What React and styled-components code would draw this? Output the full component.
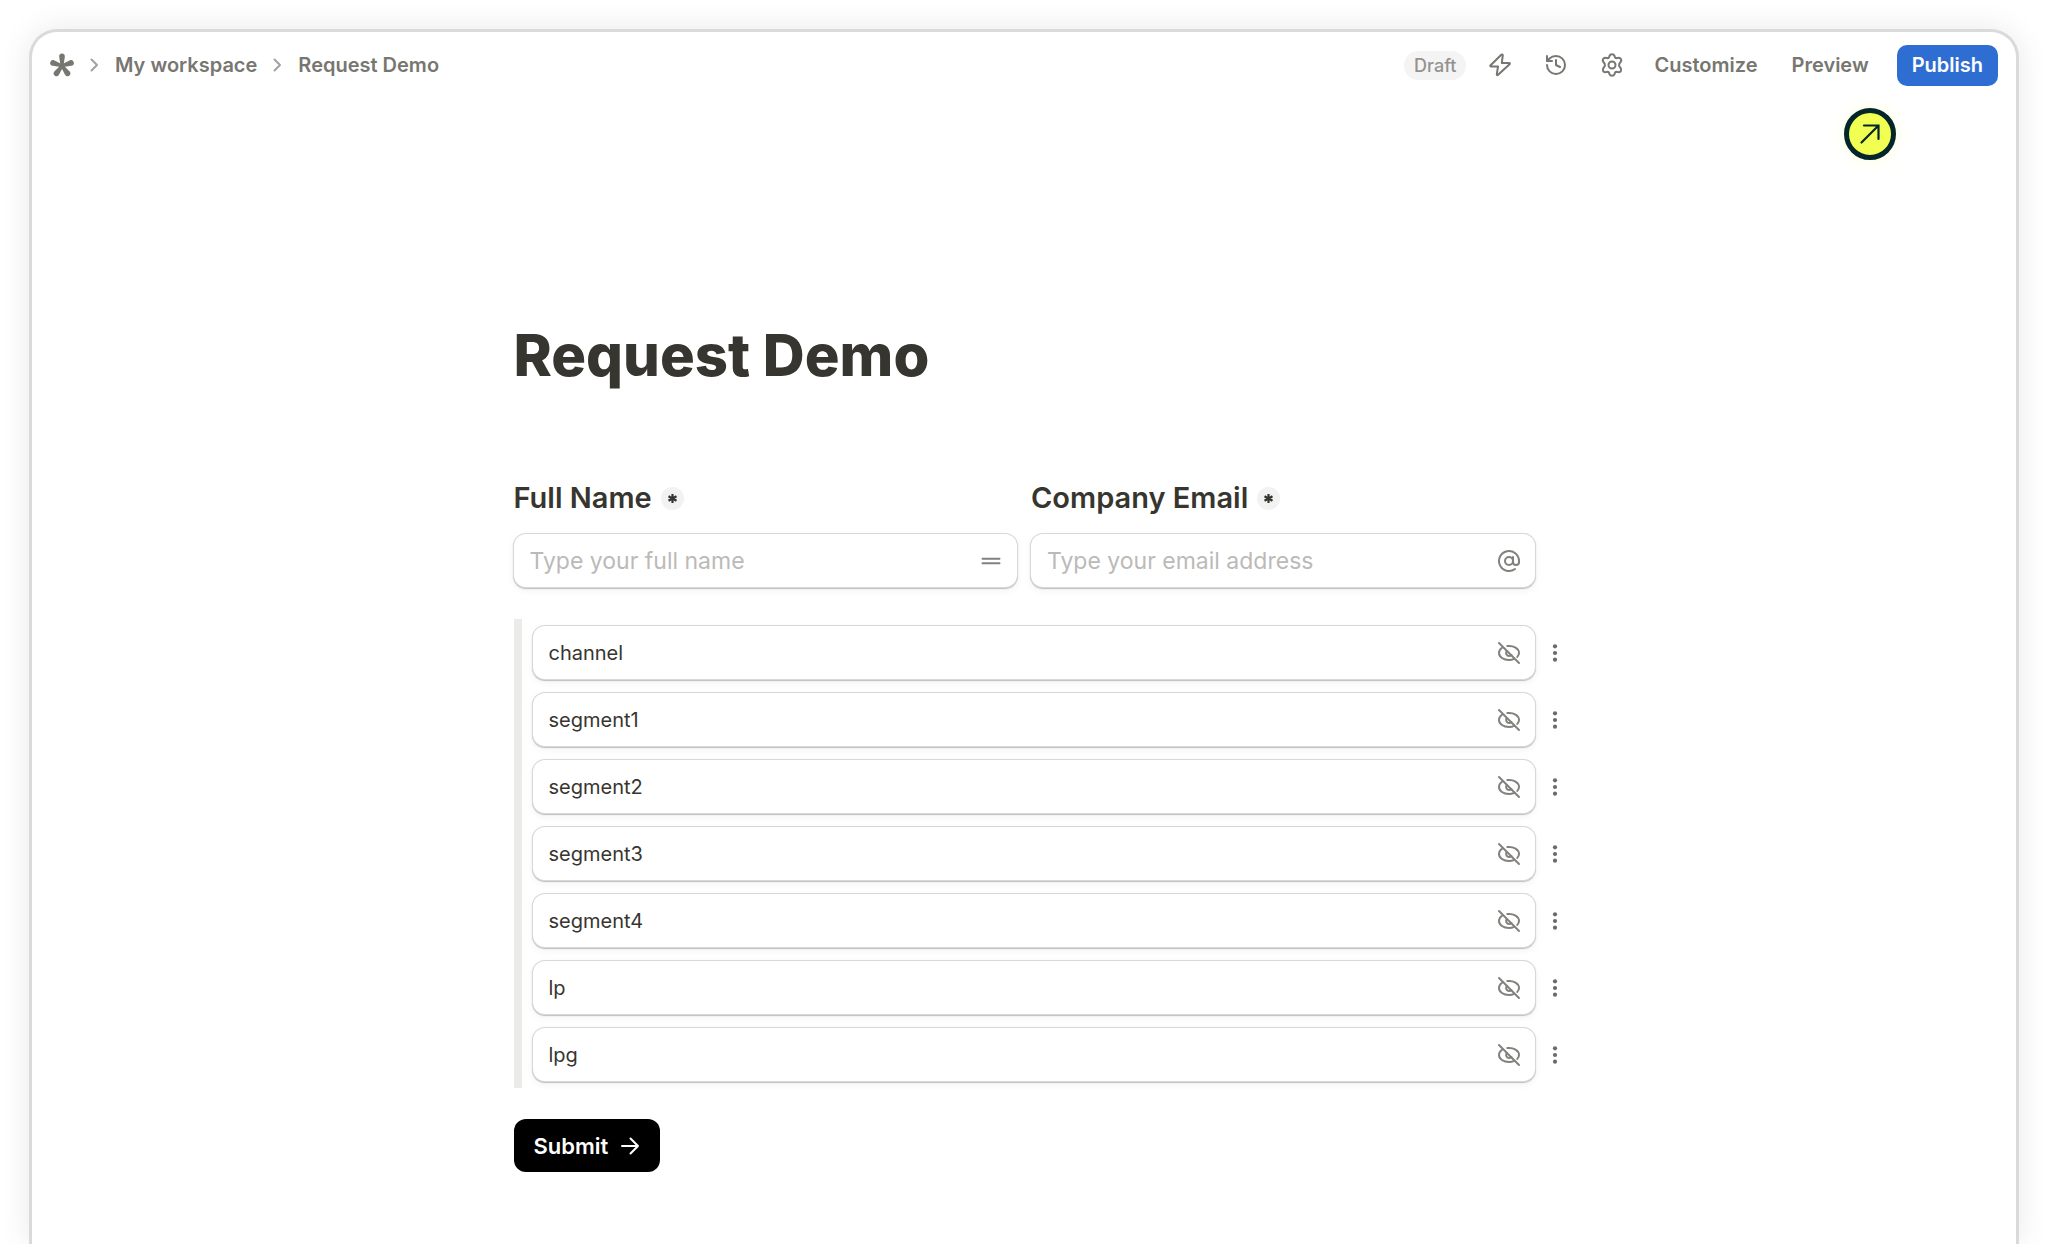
import React from "react";
import styled, { createGlobalStyle } from "styled-components";
import { AtSign, History } from "lucide-react";

const GlobalStyle = createGlobalStyle`
  * {
    box-sizing: border-box;
  }

  body {
    margin: 0;
    background-color: #ffffff;
    color: #37352f;
    font-family: Inter, "Liberation Sans", sans-serif;
  }

  button,
  input {
    font-family: inherit;
  }
`;

const Page = styled.div`
  padding: 29px 29px 0;
  overflow: hidden;
`;

const Window = styled.div`
  position: relative;
  min-height: calc(100vh - 29px);
  border: 3px solid #d9dbda;
  border-bottom: none;
  border-radius: 28px 28px 0 0;
  background-color: #ffffff;
  box-shadow: 0 0 32px rgba(0, 0, 0, 0.09);
`;

const Header = styled.header`
  display: flex;
  align-items: center;
  justify-content: space-between;
  height: 66px;
  padding: 0 18px;
`;

const Breadcrumbs = styled.nav`
  display: flex;
  align-items: center;
  gap: 16px;
`;

const Crumb = styled.a`
  display: flex;
  color: #777670;
  font-size: 20px;
  font-weight: 600;
  line-height: 24px;
  text-decoration: none;
`;

const Actions = styled.div`
  display: flex;
  align-items: center;
  gap: 34px;
`;

const IconGroup = styled.div`
  display: flex;
  align-items: center;
  gap: 32px;
  margin: 0 -4px 0 -12px;
`;

const Status = styled.span`
  padding: 0 10px;
  border-radius: 15px;
  background-color: #f4f4f4;
  color: #93928e;
  font-size: 18px;
  font-weight: 500;
  line-height: 29px;
`;

const PlainButton = styled.button`
  display: flex;
  align-items: center;
  padding: 0;
  border: none;
  background: none;
  color: #777670;
  font-size: 20px;
  font-weight: 600;
  line-height: 24px;
  cursor: pointer;
`;

const Publish = styled(PlainButton)`
  height: 41px;
  margin-left: -6px;
  padding: 0 15px;
  border-radius: 10px;
  background-color: #2e6dd2;
  color: white;
`;

const Pointer = styled.div`
  position: absolute;
  top: 76px;
  right: 120px;
  display: flex;
  align-items: center;
  justify-content: center;
  width: 52px;
  height: 52px;
  border: 5px solid #04262a;
  border-radius: 50%;
  background-color: #f0ff52;
  box-shadow: 0 0 16px rgba(240, 255, 82, 0.2);
`;

const Form = styled.form`
  max-width: 1021px;
  margin: 0 auto;
  padding: 221px 0 60px;
`;

const Title = styled.h1`
  margin: 0 0 89px;
  font-size: 58px;
  font-weight: 800;
  line-height: 72px;
`;

const Fields = styled.div`
  display: grid;
  grid-template-columns: 1fr 1fr;
  gap: 14px;
  margin-bottom: 32px;
`;

const LabelRow = styled.div`
  display: flex;
  align-items: center;
  gap: 9px;
  margin-bottom: 18px;
`;

const Label = styled.label`
  font-size: 29px;
  font-weight: 600;
  line-height: 36px;
`;

const Required = styled.span`
  display: flex;
  align-items: center;
  justify-content: center;
  width: 23px;
  height: 23px;
  border-radius: 50%;
  background-color: #f2f2f2;
`;

const InputBox = styled.div`
  display: flex;
  align-items: center;
  flex: 1;
  height: 53px;
  padding: 0 14px 0 16px;
  border-radius: 12px;
  background-color: white;
  color: #82817d;
  box-shadow: 0 0 0 1px #d8d8d8, 0 1px 1px 1px rgba(0, 0, 0, 0.22),
    0 3px 8px rgba(0, 0, 0, 0.06);
`;

const Input = styled.input`
  flex: 1;
  min-width: 0;
  padding: 0;
  border: none;
  outline: none;
  background: none;
  color: #37352f;
  font-size: ${(props) => (props.$small ? "20px" : "23px")};

  &::placeholder {
    color: #bbbab8;
    opacity: 1;
  }
`;

const HiddenFields = styled.div`
  display: flex;
  flex-direction: column;
  gap: 14px;
  margin-bottom: 31px;
  padding: 7px 0 7px 11px;
  border-left: 8px solid #ebebea;
`;

const HiddenField = styled.div`
  display: flex;
  align-items: center;
  margin-right: -32px;
`;

const MenuButton = styled(PlainButton)`
  justify-content: center;
  width: 12px;
  height: 28px;
  margin-left: 14px;
  margin-right: 6px;
`;

const Submit = styled.button`
  display: flex;
  align-items: center;
  gap: 12px;
  height: 53px;
  padding: 0 20px;
  border: none;
  border-radius: 12px;
  background-color: black;
  color: white;
  font-size: 22px;
  font-weight: 600;
  line-height: 28px;
  cursor: pointer;
`;

const hiddenFields = [
  "channel",
  "segment1",
  "segment2",
  "segment3",
  "segment4",
  "lp",
  "lpg",
];

const LogoIcon = () => (
  <svg width="24" height="24" viewBox="0 0 24 24" fill="#777670">
    {[0, 72, 144, 216, 288].map((angle) => (
      <path
        key={angle}
        transform={`rotate(${angle} 12 12.8)`}
        d="M10.600 13.500 9.200 4C8.900 1.800 10 .6 12 .6s3.100 1.200 2.800 3.400L13.400 13.500z"
      />
    ))}
  </svg>
);

const ChevronIcon = () => (
  <svg width="9" height="14" viewBox="0 0 9 14" fill="none">
    <path
      d="M1.500 1.500 7 7l-5.500 5.500"
      stroke="#a3a29e"
      strokeWidth="2"
      strokeLinecap="round"
      strokeLinejoin="round"
    />
  </svg>
);

const ZapIcon = () => (
  <svg width="24" height="24" viewBox="0 0 24 24" fill="none">
    <path
      d="M13.300 1.800 2.600 12.300c-.6.600-.3 1.300.5 1.300H10L8.800 21.200c-.1 1 .6 1.300 1.300.6L21.600 11.200c.6-.6.300-1.300-.5-1.300H13.800l1-7.500c.1-1-.8-1.300-1.500-.6z"
      stroke="currentColor"
      strokeWidth="2"
      strokeLinejoin="round"
    />
  </svg>
);

const GearIcon = () => (
  <svg width="24" height="24" viewBox="0 0 24 24" fill="none">
    <g stroke="currentColor" strokeWidth="2" strokeLinejoin="round">
      <path d="M9.500 2.900C9.900 1.700 10.800 1.200 12 1.200s2.100.5 2.500 1.700l.3 1c.3.900 1.200 1.400 2.100 1.200l1.100-.2c1.300-.3 2.300.1 2.900 1.200s.5 2.100-.4 3.100l-.7.8c-.9 1-.9 3 0 4l.7.8c.9 1 1 2 .4 3.100s-1.600 1.500-2.900 1.200l-1.100-.2c-.9-.2-1.800.300-2.100 1.200l-.3 1c-.4 1.200-1.300 1.700-2.500 1.700s-2.100-.5-2.500-1.700l-.3-1c-.3-.9-1.200-1.400-2.100-1.200l-1.100.2c-1.300.3-2.300-.1-2.900-1.200s-.5-2.100.4-3.100l.7-.8c.9-1 .9-3 0-4l-.7-.8c-.9-1-1-2-.4-3.100s1.600-1.500 2.900-1.200l1.100.2c.9.200 1.800-.3 2.100-1.200z" />
      <circle cx="12" cy="12" r="3.500" />
    </g>
  </svg>
);

const ArrowUpRight = () => (
  <svg width="24" height="24" viewBox="0 0 24 24" fill="none">
    <path
      d="M3.500 20.500 20 4M6 3.500h14.500V17"
      stroke="#04262a"
      strokeWidth="2.200"
      strokeLinecap="round"
    />
  </svg>
);

const AsteriskIcon = () => (
  <svg width="11" height="11" viewBox="0 0 11 11">
    <path
      d="M5.500 1v9M1.500 3.200l8 4.600M9.500 3.200l-8 4.600"
      stroke="#37352f"
      strokeWidth="2.200"
    />
  </svg>
);

const LinesIcon = () => (
  <svg width="24" height="24" viewBox="0 0 24 24">
    <path
      d="M3.500 9.800h17M3.500 14.200h17"
      stroke="currentColor"
      strokeWidth="2"
      strokeLinecap="round"
    />
  </svg>
);

const EyeOffIcon = () => (
  <svg width="24" height="24" viewBox="0 0 24 24" fill="none">
    <g stroke="currentColor" strokeWidth="2" strokeLinecap="round">
      <path d="M2 2l20 20" />
      <path d="M5 6.800C3 8.200 2 10 2 12c0 4 4.400 7 10 7 2 0 3.700-.4 5.200-1.100" />
      <path d="M10.400 5.100C16.600 4.400 22 7.500 22 12c0 1.500-.7 2.800-1.700 3.900" />
      <path d="M9.500 10c-1.100 2.800.4 5 2.500 5 1 0 1.900-.4 2.400-1" />
    </g>
  </svg>
);

const DotsIcon = () => (
  <svg width="6" height="20" viewBox="0 0 6 20" fill="#6b6a66">
    <circle cx="3" cy="3.300" r="2.100" />
    <circle cx="3" cy="10" r="2.100" />
    <circle cx="3" cy="16.700" r="2.100" />
  </svg>
);

const ArrowRight = () => (
  <svg width="20" height="20" viewBox="0 0 20 20" fill="none">
    <path
      d="M2 10h16M10.500 2.500 18 10l-7.500 7.500"
      stroke="white"
      strokeWidth="2"
      strokeLinecap="round"
      strokeLinejoin="round"
    />
  </svg>
);

const Field = ({ id, label, type, placeholder, icon }) => (
  <div>
    <LabelRow>
      <Label htmlFor={id}>{label}</Label>
      <Required>
        <AsteriskIcon />
      </Required>
    </LabelRow>
    <InputBox>
      <Input id={id} type={type} placeholder={placeholder} />
      {icon}
    </InputBox>
  </div>
);

const App = () => {
  return (
    <>
      <GlobalStyle />
      <Page>
        <Window>
          <Header>
            <Breadcrumbs>
              <Crumb href="#" aria-label="Home">
                <LogoIcon />
              </Crumb>
              <ChevronIcon />
              <Crumb href="#workspace">My workspace</Crumb>
              <ChevronIcon />
              <Crumb href="#form">Request Demo</Crumb>
            </Breadcrumbs>

            <Actions>
              <Status>Draft</Status>
              <IconGroup>
                <PlainButton aria-label="Integrations">
                  <ZapIcon />
                </PlainButton>
                <PlainButton aria-label="History">
                  <History size={24} />
                </PlainButton>
                <PlainButton aria-label="Settings">
                  <GearIcon />
                </PlainButton>
              </IconGroup>
              <PlainButton>Customize</PlainButton>
              <PlainButton>Preview</PlainButton>
              <Publish>Publish</Publish>
            </Actions>
          </Header>

          <Pointer>
            <ArrowUpRight />
          </Pointer>

          <Form onSubmit={(e) => e.preventDefault()}>
            <Title>Request Demo</Title>

            <Fields>
              <Field
                id="name"
                label="Full Name"
                type="text"
                placeholder="Type your full name"
                icon={<LinesIcon />}
              />
              <Field
                id="email"
                label="Company Email"
                type="email"
                placeholder="Type your email address"
                icon={<AtSign size={24} />}
              />
            </Fields>

            <HiddenFields>
              {hiddenFields.map((name) => (
                <HiddenField key={name}>
                  <InputBox>
                    <Input $small aria-label={name} defaultValue={name} />
                    <EyeOffIcon />
                  </InputBox>
                  <MenuButton type="button" aria-label={`${name} options`}>
                    <DotsIcon />
                  </MenuButton>
                </HiddenField>
              ))}
            </HiddenFields>

            <Submit type="submit">
              Submit
              <ArrowRight />
            </Submit>
          </Form>
        </Window>
      </Page>
    </>
  );
};

export default App;
